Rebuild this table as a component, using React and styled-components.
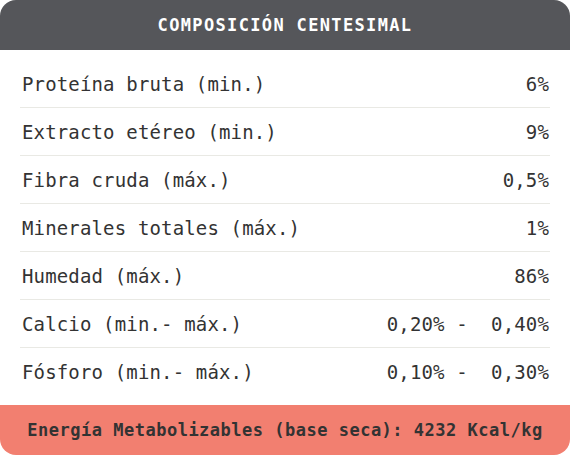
import React from "react";
import styled, { createGlobalStyle } from "styled-components";

const Global = createGlobalStyle`
  html, body { margin: 0; padding: 0; background: #ffffff; }
  body { font-family: "DejaVu Sans Mono", "Liberation Mono", monospace; }
`;

const Card = styled.section`
  width: 570px;
  height: 455px;
  display: flex;
  flex-direction: column;
  background: #ffffff;
  border-radius: 16px;
  overflow: hidden;
`;

const Header = styled.h1`
  margin: 0;
  height: 50px;
  display: flex;
  align-items: center;
  justify-content: center;
  background: #55565a;
  color: #ffffff;
  font-size: 17px;
  font-weight: bold;
  letter-spacing: 1.35px;
`;

const Body = styled.div`
  flex: 1;
  padding: 10px 20px;
  display: flex;
  flex-direction: column;
`;

const Row = styled.div`
  height: 47px;
  display: flex;
  align-items: center;
  justify-content: space-between;
  padding: 0 1px 0 2px;
  border-bottom: ${(p) => (p.$last ? "none" : "1px solid #e9e9e4")};
  color: #333333;
  font-size: 19px;
  letter-spacing: 0.15px;
  white-space: pre;
`;

const Footer = styled.footer`
  height: 50px;
  display: flex;
  align-items: center;
  justify-content: center;
  background: #f27f70;
  color: #333333;
  font-size: 17px;
  font-weight: bold;
  letter-spacing: 0.5px;
  white-space: pre;
`;

const rows = [
  ["Proteína bruta (min.)", "6%"],
  ["Extracto etéreo (min.)", "9%"],
  ["Fibra cruda (máx.)", "0,5%"],
  ["Minerales totales (máx.)", "1%"],
  ["Humedad (máx.)", "86%"],
  ["Calcio (min.- máx.)", "0,20% -  0,40%"],
  ["Fósforo (min.- máx.)", "0,10% -  0,30%"],
];

export default function App() {
  return (
    <>
      <Global />
      <Card>
        <Header>COMPOSICIÓN CENTESIMAL</Header>
        <Body>
          {rows.map(([label, value], i) => (
            <Row key={label} $last={i === rows.length - 1}>
              <span>{label}</span>
              <span>{value}</span>
            </Row>
          ))}
        </Body>
        <Footer>Energía Metabolizables (base seca): 4232 Kcal/kg</Footer>
      </Card>
    </>
  );
}
